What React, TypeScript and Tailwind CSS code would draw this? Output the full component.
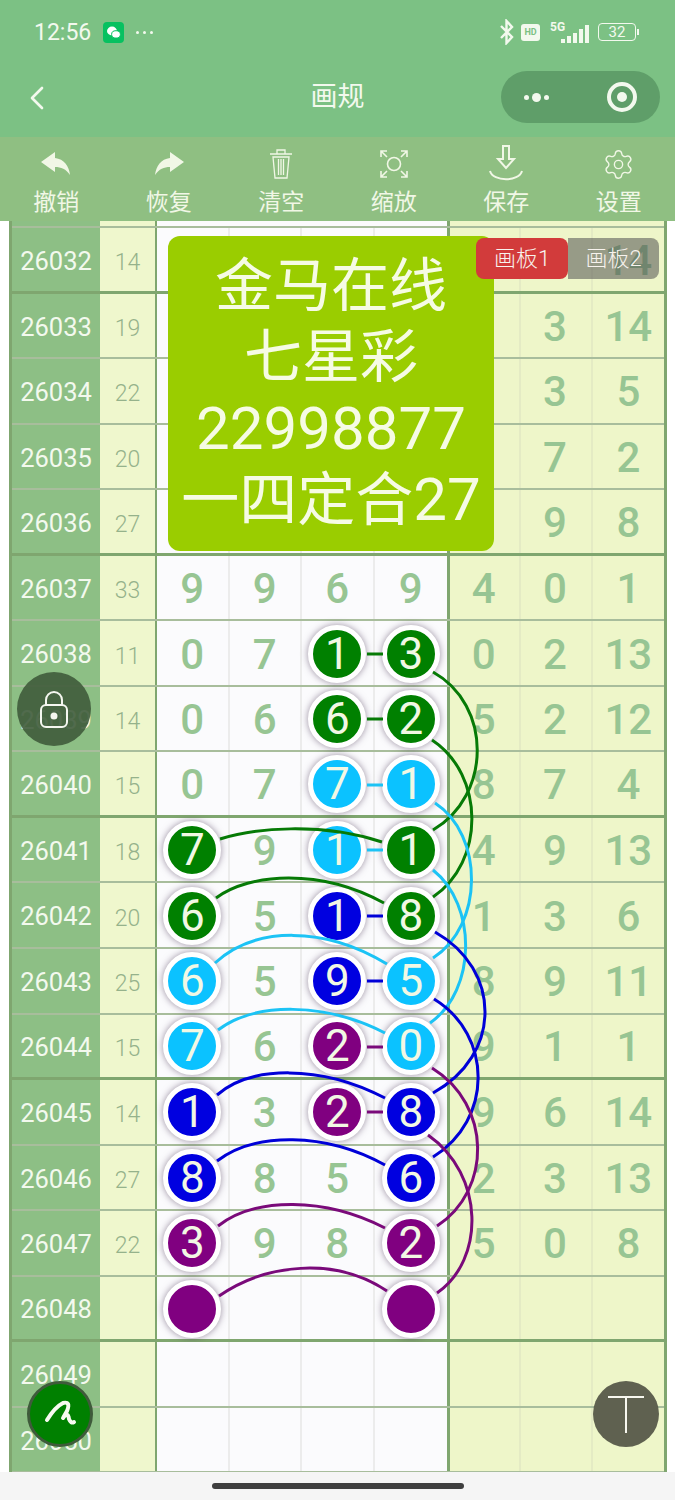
import { ChevronLeft, Settings } from "lucide-react";

type Ball = "g" | "c" | "b" | "p";
type Cell = { n?: string; ball?: Ball };

const ballColors: Record<Ball, string> = {
  g: "bg-[#008000]",
  c: "bg-[#0bc2ff]",
  b: "bg-[#0000e0]",
  p: "bg-[#800080]",
};

const d = (n: string): Cell => ({ n });
const g = (n: string): Cell => ({ n, ball: "g" });
const c = (n: string): Cell => ({ n, ball: "c" });
const b = (n: string): Cell => ({ n, ball: "b" });
const p = (n: string): Cell => ({ n, ball: "p" });
const e: Cell = {};

const rows: { id: string; sum: string; main: Cell[]; right: string[]; heavy?: boolean }[] = [
  { id: "26032", sum: "14", main: [e, e, e, e], right: ["", "", "14"], heavy: true },
  { id: "26033", sum: "19", main: [e, e, e, e], right: ["", "3", "14"] },
  { id: "26034", sum: "22", main: [e, e, e, e], right: ["", "3", "5"] },
  { id: "26035", sum: "20", main: [e, e, e, e], right: ["", "7", "2"] },
  { id: "26036", sum: "27", main: [e, e, e, e], right: ["", "9", "8"], heavy: true },
  { id: "26037", sum: "33", main: [d("9"), d("9"), d("6"), d("9")], right: ["4", "0", "1"] },
  { id: "26038", sum: "11", main: [d("0"), d("7"), g("1"), g("3")], right: ["0", "2", "13"] },
  { id: "26039", sum: "14", main: [d("0"), d("6"), g("6"), g("2")], right: ["5", "2", "12"] },
  { id: "26040", sum: "15", main: [d("0"), d("7"), c("7"), c("1")], right: ["8", "7", "4"], heavy: true },
  { id: "26041", sum: "18", main: [g("7"), d("9"), c("1"), g("1")], right: ["4", "9", "13"] },
  { id: "26042", sum: "20", main: [g("6"), d("5"), b("1"), g("8")], right: ["1", "3", "6"] },
  { id: "26043", sum: "25", main: [c("6"), d("5"), b("9"), c("5")], right: ["8", "9", "11"] },
  { id: "26044", sum: "15", main: [c("7"), d("6"), p("2"), c("0")], right: ["9", "1", "1"], heavy: true },
  { id: "26045", sum: "14", main: [b("1"), d("3"), p("2"), b("8")], right: ["9", "6", "14"] },
  { id: "26046", sum: "27", main: [b("8"), d("8"), d("5"), b("6")], right: ["2", "3", "13"] },
  { id: "26047", sum: "22", main: [p("3"), d("9"), d("8"), p("2")], right: ["5", "0", "8"] },
  { id: "26048", sum: "", main: [{ ball: "p" }, e, e, { ball: "p" }], right: ["", "", ""], heavy: true },
  { id: "26049", sum: "", main: [e, e, e, e], right: ["", "", ""] },
  { id: "26050", sum: "", main: [e, e, e, e], right: ["", "", ""] },
];

const green = "#067a06";
const cyan = "#1cc3f5";
const blue = "#0000d8";
const purple = "#7a0a7a";

// page coordinates, the svg is 675 wide and starts at the top of the page
const curves: { color: string; d: string }[] = [
  { color: green, d: "M367 654H383" },
  { color: green, d: "M367 719H383" },
  { color: cyan, d: "M367 785H383" },
  { color: cyan, d: "M367 850H383" },
  { color: blue, d: "M367 916H383" },
  { color: blue, d: "M367 981H383" },
  { color: purple, d: "M367 1047H383" },
  { color: purple, d: "M367 1112H383" },
  { color: green, d: "M433 672C492 705 492 795 433 830" },
  { color: green, d: "M432 740C485 775 485 862 433 897" },
  { color: cyan, d: "M435 803C484 835 484 925 433 958" },
  { color: cyan, d: "M433 870C477 905 477 990 430 1023" },
  { color: blue, d: "M435 932C502 970 502 1055 433 1093" },
  { color: blue, d: "M434 999C493 1035 493 1120 433 1157" },
  { color: purple, d: "M432 1068C492 1105 492 1190 437 1226" },
  { color: purple, d: "M428 1135C485 1175 485 1260 437 1293" },
  { color: green, d: "M220 839C255 828 320 822 382 842" },
  { color: green, d: "M216 898C250 873 320 868 384 903" },
  { color: cyan, d: "M215 963C255 926 325 926 387 964" },
  { color: cyan, d: "M218 1030C255 1002 325 1002 385 1033" },
  { color: blue, d: "M217 1095C250 1066 320 1064 385 1098" },
  { color: blue, d: "M217 1161C255 1132 325 1132 385 1165" },
  { color: purple, d: "M218 1226C255 1197 325 1197 385 1228" },
  { color: purple, d: "M219 1296C265 1264 335 1256 387 1291" },
];

const tools = ["撤销", "恢复", "清空", "缩放", "保存", "设置"];

function ToolIcon({ index }: { index: number }) {
  if (index === 0 || index === 1) {
    return (
      <svg width="30" height="24" viewBox="0 0 30 24" fill="#f1f7e6" className={index === 1 ? "-scale-x-100" : ""}>
        <path d="M0 10 14 0v6c9 1 14 8 15 17-4-6-9-8-15-8v5z" />
      </svg>
    );
  }
  if (index === 2) {
    return (
      <svg width="24" height="32" viewBox="0 0 24 32" fill="none" stroke="#f1f7e6" strokeWidth="1.3">
        <path d="M1 6h22M8 6V2h8v4M4 9l2 21h12l2-21zM9.5 11v16M12 11v16M14.5 11v16" />
      </svg>
    );
  }
  if (index === 3) {
    return (
      <svg width="32" height="32" viewBox="0 0 32 32" fill="none" stroke="#f1f7e6" strokeWidth="1.6">
        <circle cx="16" cy="16" r="6.5" />
        <path d="M3 9V3h6M3 3l6 6M23 3h6v6M29 3l-6 6M3 23v6h6M3 29l6-6M29 23v6h-6M29 29l-6-6" />
      </svg>
    );
  }
  if (index === 4) {
    return (
      <svg width="36" height="40" viewBox="0 0 36 40" fill="none" stroke="#f1f7e6" strokeWidth="2">
        <path d="M15 2h6v13h5l-8 9-8-9h5z" />
        <path d="M2 27c3 11 29 11 32 0" />
      </svg>
    );
  }
  return <Settings size={33} strokeWidth={1} color="#f1f7e6" />;
}

function Digit({ cell }: { cell: Cell }) {
  if (cell.ball) {
    return (
      <span
        className={`flex h-[58px] w-[58px] items-center justify-center rounded-full border-[5px] border-white text-[44px] font-normal leading-none text-[#f2f8e4] shadow-[0_0_7px_rgba(70,50,80,0.55)] ${ballColors[cell.ball]}`}
      >
        {cell.n}
      </span>
    );
  }
  return <span className="pt-[2px] text-[42px] font-medium leading-none text-[#97c593]">{cell.n}</span>;
}

export default function App() {
  return (
    <div className="relative flex h-[1500px] w-[675px] flex-col overflow-hidden bg-white font-['Roboto','Noto_Sans_CJK_SC',sans-serif]">
      <header className="bg-[#7cc184] text-[#f3f9ee]">
        <div className="flex h-[64px] items-center justify-between pl-[34px] pr-[36px]">
          <div className="flex items-center gap-[12px]">
            <span className="text-[23px] leading-none">12:56</span>
            <span className="flex h-[21px] w-[21px] items-center justify-center rounded-[4px] bg-[#07c160]">
              <svg width="15" height="13" viewBox="0 0 15 13" fill="#fff">
                <ellipse cx="6" cy="5" rx="5" ry="4.4" />
                <ellipse cx="10" cy="8.4" rx="4.4" ry="3.7" stroke="#07c160" strokeWidth="1" />
              </svg>
            </span>
            <div className="flex items-center gap-[4px]">
              <span className="h-[3px] w-[3px] rounded-full bg-[#f3f9ee]" />
              <span className="h-[3px] w-[3px] rounded-full bg-[#f3f9ee]" />
              <span className="h-[3px] w-[3px] rounded-full bg-[#f3f9ee]" />
            </div>
          </div>
          <div className="flex items-center gap-[7px]">
            <svg width="15" height="26" viewBox="0 0 15 26" fill="none" stroke="#f3f9ee" strokeWidth="2.4">
              <path d="M2 7l11 11-5.5 6V2L13 8 2 19" />
            </svg>
            <span className="flex h-[17px] w-[19px] items-center justify-center rounded-[3px] bg-[#f3f9ee] text-[9px] font-bold leading-none text-[#7cc184]">HD</span>
            <div className="relative ml-[3px] flex h-[22px] w-[39px] items-end justify-end gap-[2px]">
              <span className="absolute left-0 top-0 text-[12px] font-bold leading-none">5G</span>
              <span className="h-[4px] w-[4px] bg-[#f3f9ee]" />
              <span className="h-[7px] w-[4px] bg-[#f3f9ee]" />
              <span className="h-[10px] w-[4px] bg-[#f3f9ee]" />
              <span className="h-[14px] w-[4px] bg-[#f3f9ee]" />
              <span className="h-[18px] w-[4px] bg-[#f3f9ee]" />
            </div>
            <div className="ml-[2px] flex items-center gap-[1px]">
              <span className="flex h-[18px] w-[38px] items-center justify-center rounded-[4px] border border-[#f3f9ee] text-[15px] leading-none">32</span>
              <span className="h-[6px] w-[2px] bg-[#f3f9ee]" />
            </div>
          </div>
        </div>
        <div className="relative flex h-[73px] items-center justify-center">
          <ChevronLeft size={40} strokeWidth={1.6} className="absolute left-[17px] top-[14px]" />
          <h1 className="pb-[6px] text-[27px] font-normal leading-none">画规</h1>
          <div className="absolute left-[501px] top-[7px] flex h-[52px] w-[159px] items-center justify-between rounded-full bg-[#5f9e69] pl-[23px] pr-[23px]">
            <div className="flex items-center gap-[3px]">
              <span className="h-[5px] w-[5px] rounded-full bg-[#f3f9ee]" />
              <span className="h-[9px] w-[9px] rounded-full bg-[#f3f9ee]" />
              <span className="h-[5px] w-[5px] rounded-full bg-[#f3f9ee]" />
            </div>
            <span className="flex h-[30px] w-[30px] items-center justify-center rounded-full border-[4px] border-[#f3f9ee]">
              <span className="h-[10px] w-[10px] rounded-full bg-[#f3f9ee]" />
            </span>
          </div>
        </div>
      </header>

      <nav className="grid h-[84px] grid-cols-6 bg-[#8fbf82] text-[#f1f7e6]">
        {tools.map((t, i) => (
          <div key={t} className="flex flex-col items-center">
            <div className="flex h-[54px] items-center justify-center">
              <ToolIcon index={i} />
            </div>
            <span className="text-[23px] leading-none">{t}</span>
          </div>
        ))}
      </nav>

      <main className="flex h-[1251px] flex-col overflow-hidden bg-white pl-[9px] pr-[8px]">
        <div className="h-[1251px] border-x-[3px] border-[#7fa66f]">
          <div className="grid h-[7px] grid-cols-[88px_55px_295px_1fr] border-b-[2px] border-[#a8bd9c]">
            <div className="bg-[#8dbf85]" />
            <div className="bg-[#eff7cd]" />
            <div className="border-l-[2px] border-r-[3px] border-[#7fa66f] bg-[#fbfbfd]" />
            <div className="bg-[#eef6c9]" />
          </div>
          {rows.map((r) => (
            <div
              key={r.id}
              className={`grid h-[65.55px] grid-cols-[88px_55px_295px_1fr] ${r.heavy ? "border-b-[3px] border-[#7fa66f]" : "border-b-[2px] border-[#a8bd9c]"}`}
            >
              <div className="flex items-center justify-center bg-[#8dbf85] pt-[4px] text-[25.5px] leading-none text-[#f3f9ee]">{r.id}</div>
              <div className="flex items-center justify-center bg-[#eff7cd] pt-[6px] text-[23px] font-light leading-none text-[#95b28b]">{r.sum}</div>
              <div className="grid grid-cols-4 border-l-[2px] border-r-[3px] border-[#7fa66f] bg-[#fbfbfd]">
                {r.main.map((cell, i) => (
                  <div key={i} className={`flex items-center justify-center pt-[1px] ${i < 3 ? "border-r-[2px] border-[#ececec]" : ""}`}>
                    <Digit cell={cell} />
                  </div>
                ))}
              </div>
              <div className="grid grid-cols-3 bg-[#eef6c9]">
                {r.right.map((v, i) => (
                  <div key={i} className={`flex items-center justify-center pt-[3px] text-[42px] font-medium leading-none text-[#97c593] ${i < 2 ? "border-r-[2px] border-[#e4ebc4] pr-[2px]" : ""}`}>
                    {v}
                  </div>
                ))}
              </div>
            </div>
          ))}
        </div>
      </main>

      <footer className="flex flex-1 items-center justify-center bg-[#f5f5f5]">
        <span className="h-[6px] w-[252px] rounded-full bg-[#3f3f3f]" />
      </footer>

      {/* curves sit over the balls and the digits */}
      <svg width="675" height="1500" viewBox="0 0 675 1500" fill="none" className="pointer-events-none absolute left-0 top-0">
        {curves.map((l, i) => (
          <path key={i} d={l.d} stroke={l.color} strokeWidth="3" />
        ))}
      </svg>

      <div className="absolute left-[168px] top-[236px] flex h-[315px] w-[326px] flex-col items-center justify-center rounded-[12px] bg-[#9acd00] text-[58px] font-normal leading-[71px] text-[#f6fbe4]">
        <span>金马在线</span>
        <span>七星彩</span>
        <span className="text-[60px]">22998877</span>
        <span>
          一四定合<span className="text-[60px]">27</span>
        </span>
      </div>

      <div className="absolute left-[476px] top-[238px] flex h-[41px] w-[183px] text-[22px] font-light leading-none text-[#f8f3ee]">
        <span className="flex w-[92px] items-center justify-center rounded-[8px] bg-[#d23b3b]">画板1</span>
        <span className="flex flex-1 items-center justify-center rounded-r-[8px] bg-[rgba(80,80,80,0.55)]">画板2</span>
      </div>

      <button className="absolute left-[17px] top-[672px] flex h-[74px] w-[74px] items-center justify-center rounded-full bg-[#3f5b3b]/90">
        <svg width="30" height="38" viewBox="0 0 30 38" fill="none" stroke="#f5f7f0" strokeWidth="2">
          <path d="M7 16V10a8 8 0 0 1 16 0v6" />
          <rect x="2" y="15" width="26" height="22" rx="5" />
          <circle cx="15" cy="26" r="2.5" fill="#f5f7f0" />
        </svg>
      </button>

      <button className="absolute left-[27px] top-[1381px] flex h-[66px] w-[66px] items-center justify-center rounded-full border-[3px] border-[#3f5b3b] bg-[#008000]">
        <svg width="34" height="34" viewBox="0 0 34 34" fill="none" stroke="#f7faf0" strokeWidth="4" strokeLinecap="round" strokeLinejoin="round">
          <path d="M4 23Q12 10 20 6Q28 4 24 14L20 21Q25 14 26 22Q28 27 31 25" />
        </svg>
      </button>

      <button className="absolute left-[593px] top-[1381px] flex h-[66px] w-[66px] items-center justify-center rounded-full bg-[#5f6150]">
        <svg width="38" height="38" viewBox="0 0 38 38" fill="none" stroke="#f7f7ef" strokeWidth="2">
          <path d="M1 2h36M19 2v36" />
        </svg>
      </button>
    </div>
  );
}
